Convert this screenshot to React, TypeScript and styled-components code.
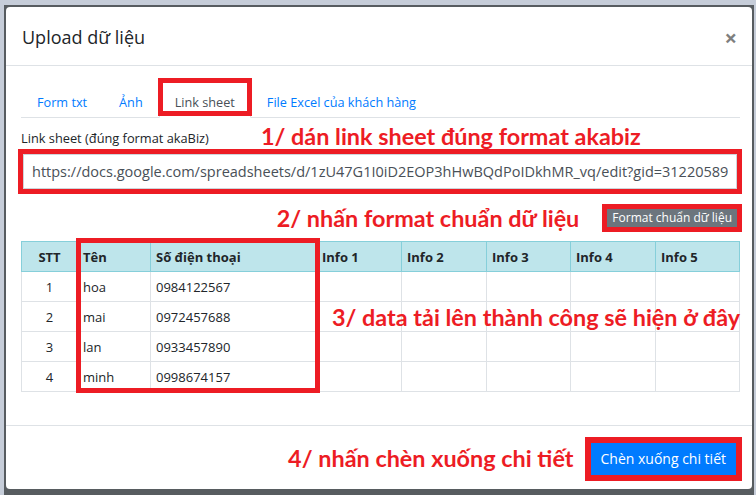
import React from 'react'
import styled, { createGlobalStyle } from 'styled-components'

const RED = '#ed1c24'

const GlobalStyle = createGlobalStyle`
	html, body {
		margin: 0;
		padding: 0;
		background: #c6cdd9;
		font-family: 'Open Sans', 'Noto Sans', sans-serif;
		color: #212529;
	}
	* {
		box-sizing: border-box;
	}
`

const Backdrop = styled.div`
	margin: 5px 2px 0 4px;
	height: 490px;
	padding: 2px 2px 0 2px;
	background: #575c60;
`

const Modal = styled.div`
	background: #fff;
	border-radius: 4px;
	height: 482px;
	display: flex;
	flex-direction: column;
`

const Header = styled.div`
	height: 59px;
	display: flex;
	align-items: center;
	justify-content: space-between;
	padding: 0 15px 0 16px;
	border-bottom: 1px solid #dee2e6;
`

const Title = styled.h5`
	margin: 0;
	font-size: 18px;
	font-weight: 400;
	line-height: 24px;
	padding-top: 2px;
`

const Close = styled.span`
	font-size: 22px;
	font-weight: 700;
	color: #000;
	opacity: 0.5;
	line-height: 1;
	padding-top: 2px;
`

const Body = styled.div`
	flex: 1;
	padding: 16px 12px 0 15px;
	display: flex;
	flex-direction: column;
`

const Tabs = styled.ul`
	list-style: none;
	margin: 0;
	padding: 0;
	display: flex;
	border-bottom: 1px solid #dee2e6;
`

const Tab = styled.li<{ $active?: boolean }>`
	position: relative;
	height: 36px;
	margin-bottom: -1px;
	padding: 3px 15px 0;
	display: flex;
	align-items: center;
	font-size: 12.7px;
	color: ${(p) => (p.$active ? '#495057' : '#007bff')};
	border: 1px solid ${(p) => (p.$active ? '#dee2e6' : 'transparent')};
	border-bottom-color: ${(p) => (p.$active ? '#fff' : 'transparent')};
	border-radius: 4px 4px 0 0;
	${(p) =>
		p.$active &&
		`
		&::after {
			content: '';
			position: absolute;
			left: -2px;
			right: -2px;
			top: -5px;
			bottom: 1px;
			border: 5px solid ${RED};
		}
	`}
`

const Note = styled.span`
	font-family: Lato, 'Noto Sans', sans-serif;
	font-weight: 700;
	font-size: 23.4px;
	line-height: 26px;
	color: ${RED};
	white-space: nowrap;
`

const LabelRow = styled.div`
	margin-top: 5px;
	height: 26px;
	display: flex;
	align-items: center;
	gap: 52px;
`

const Label = styled.label`
	font-size: 12.8px;
	padding-top: 4px;
`

const InputFrame = styled.div`
	margin: 0 -2px 0 -3px;
	border: 5px solid ${RED};
`

const Input = styled.input`
	display: block;
	width: 100%;
	height: 35px;
	border: 1px solid #ced4da;
	padding: 0 8px;
	font-family: 'Open Sans', sans-serif;
	font-size: 14.5px;
	color: #495057;
	outline: none;
`

const ActionRow = styled.div`
	margin: 10px -2px 0 0;
	height: 28px;
	display: flex;
	align-items: center;
	justify-content: flex-end;
	gap: 23px;
`

const SmallButton = styled.button`
	height: 28px;
	border: 5px solid ${RED};
	background: #6c757d;
	color: #fff;
	font-family: 'Open Sans', sans-serif;
	font-size: 12px;
	padding: 0 5px;
	line-height: 1;
`

const TableWrap = styled.div`
	position: relative;
	margin-top: 9px;
`

const Table = styled.table`
	width: 100%;
	border-collapse: collapse;
	table-layout: fixed;
	font-size: 13px;
`

const Th = styled.th<{ $center?: boolean }>`
	height: 30px;
	background: #bee5eb;
	border: 1px solid #86cfda;
	font-weight: 700;
	text-align: ${(p) => (p.$center ? 'center' : 'left')};
	padding: 0 5px;
`

const Td = styled.td<{ $center?: boolean }>`
	height: 30px;
	border: 1px solid #dee2e6;
	text-align: ${(p) => (p.$center ? 'center' : 'left')};
	padding: 0 5px;
`

const ColumnMark = styled.div`
	position: absolute;
	left: 55px;
	top: -3px;
	width: 244px;
	height: 155px;
	border: 5px solid ${RED};
	pointer-events: none;
`

const TableNote = styled(Note)`
	position: absolute;
	right: 0;
	top: 63px;
`

const Footer = styled.div`
	height: 64px;
	border-top: 1px solid #dee2e6;
	display: flex;
	align-items: center;
	justify-content: flex-end;
	gap: 11px;
	padding: 0 10px 0 15px;
`

const PrimaryButton = styled.button`
	height: 44px;
	border: 6px solid ${RED};
	background: #007bff;
	color: #fff;
	font-family: 'Open Sans', sans-serif;
	font-size: 14px;
	padding: 0 10px;
	margin-top: 2px;
`

const widths = [56, 73, 166, 85, 85, 84, 85, 84]
const heads = ['STT', 'Tên', 'Số điện thoại', 'Info 1', 'Info 2', 'Info 3', 'Info 4', 'Info 5']
const rows = [
	['1', 'hoa', '0984122567'],
	['2', 'mai', '0972457688'],
	['3', 'lan', '0933457890'],
	['4', 'minh', '0998674157'],
]

export default function App() {
	return (
		<>
			<GlobalStyle />
			<Backdrop>
				<Modal>
					<Header>
						<Title>Upload dữ liệu</Title>
						<Close>×</Close>
					</Header>
					<Body>
						<Tabs>
							<Tab>Form txt</Tab>
							<Tab>Ảnh</Tab>
							<Tab $active>Link sheet</Tab>
							<Tab>File Excel của khách hàng</Tab>
						</Tabs>
						<LabelRow>
							<Label>Link sheet (đúng format akaBiz)</Label>
							<Note>1/ dán link sheet đúng format akabiz</Note>
						</LabelRow>
						<InputFrame>
							<Input
								readOnly
								value="https://docs.google.com/spreadsheets/d/1zU47G1I0iD2EOP3hHwBQdPoIDkhMR_vq/edit?gid=31220589#"
							/>
						</InputFrame>
						<ActionRow>
							<Note>2/ nhấn format chuẩn dữ liệu</Note>
							<SmallButton>Format chuẩn dữ liệu</SmallButton>
						</ActionRow>
						<TableWrap>
							<Table>
								<colgroup>
									{widths.map((w, i) => (
										<col key={i} style={{ width: w }} />
									))}
								</colgroup>
								<thead>
									<tr>
										{heads.map((h, i) => (
											<Th key={h} $center={i === 0}>
												{h}
											</Th>
										))}
									</tr>
								</thead>
								<tbody>
									{rows.map((r) => (
										<tr key={r[0]}>
											<Td $center>{r[0]}</Td>
											<Td>{r[1]}</Td>
											<Td>{r[2]}</Td>
											{[1, 2, 3, 4, 5].map((k) => (
												<Td key={k} />
											))}
										</tr>
									))}
								</tbody>
							</Table>
							<ColumnMark />
							<TableNote>3/ data tải lên thành công sẽ hiện ở đây</TableNote>
						</TableWrap>
					</Body>
					<Footer>
						<Note>4/ nhấn chèn xuống chi tiết</Note>
						<PrimaryButton>Chèn xuống chi tiết</PrimaryButton>
					</Footer>
				</Modal>
			</Backdrop>
		</>
	)
}
